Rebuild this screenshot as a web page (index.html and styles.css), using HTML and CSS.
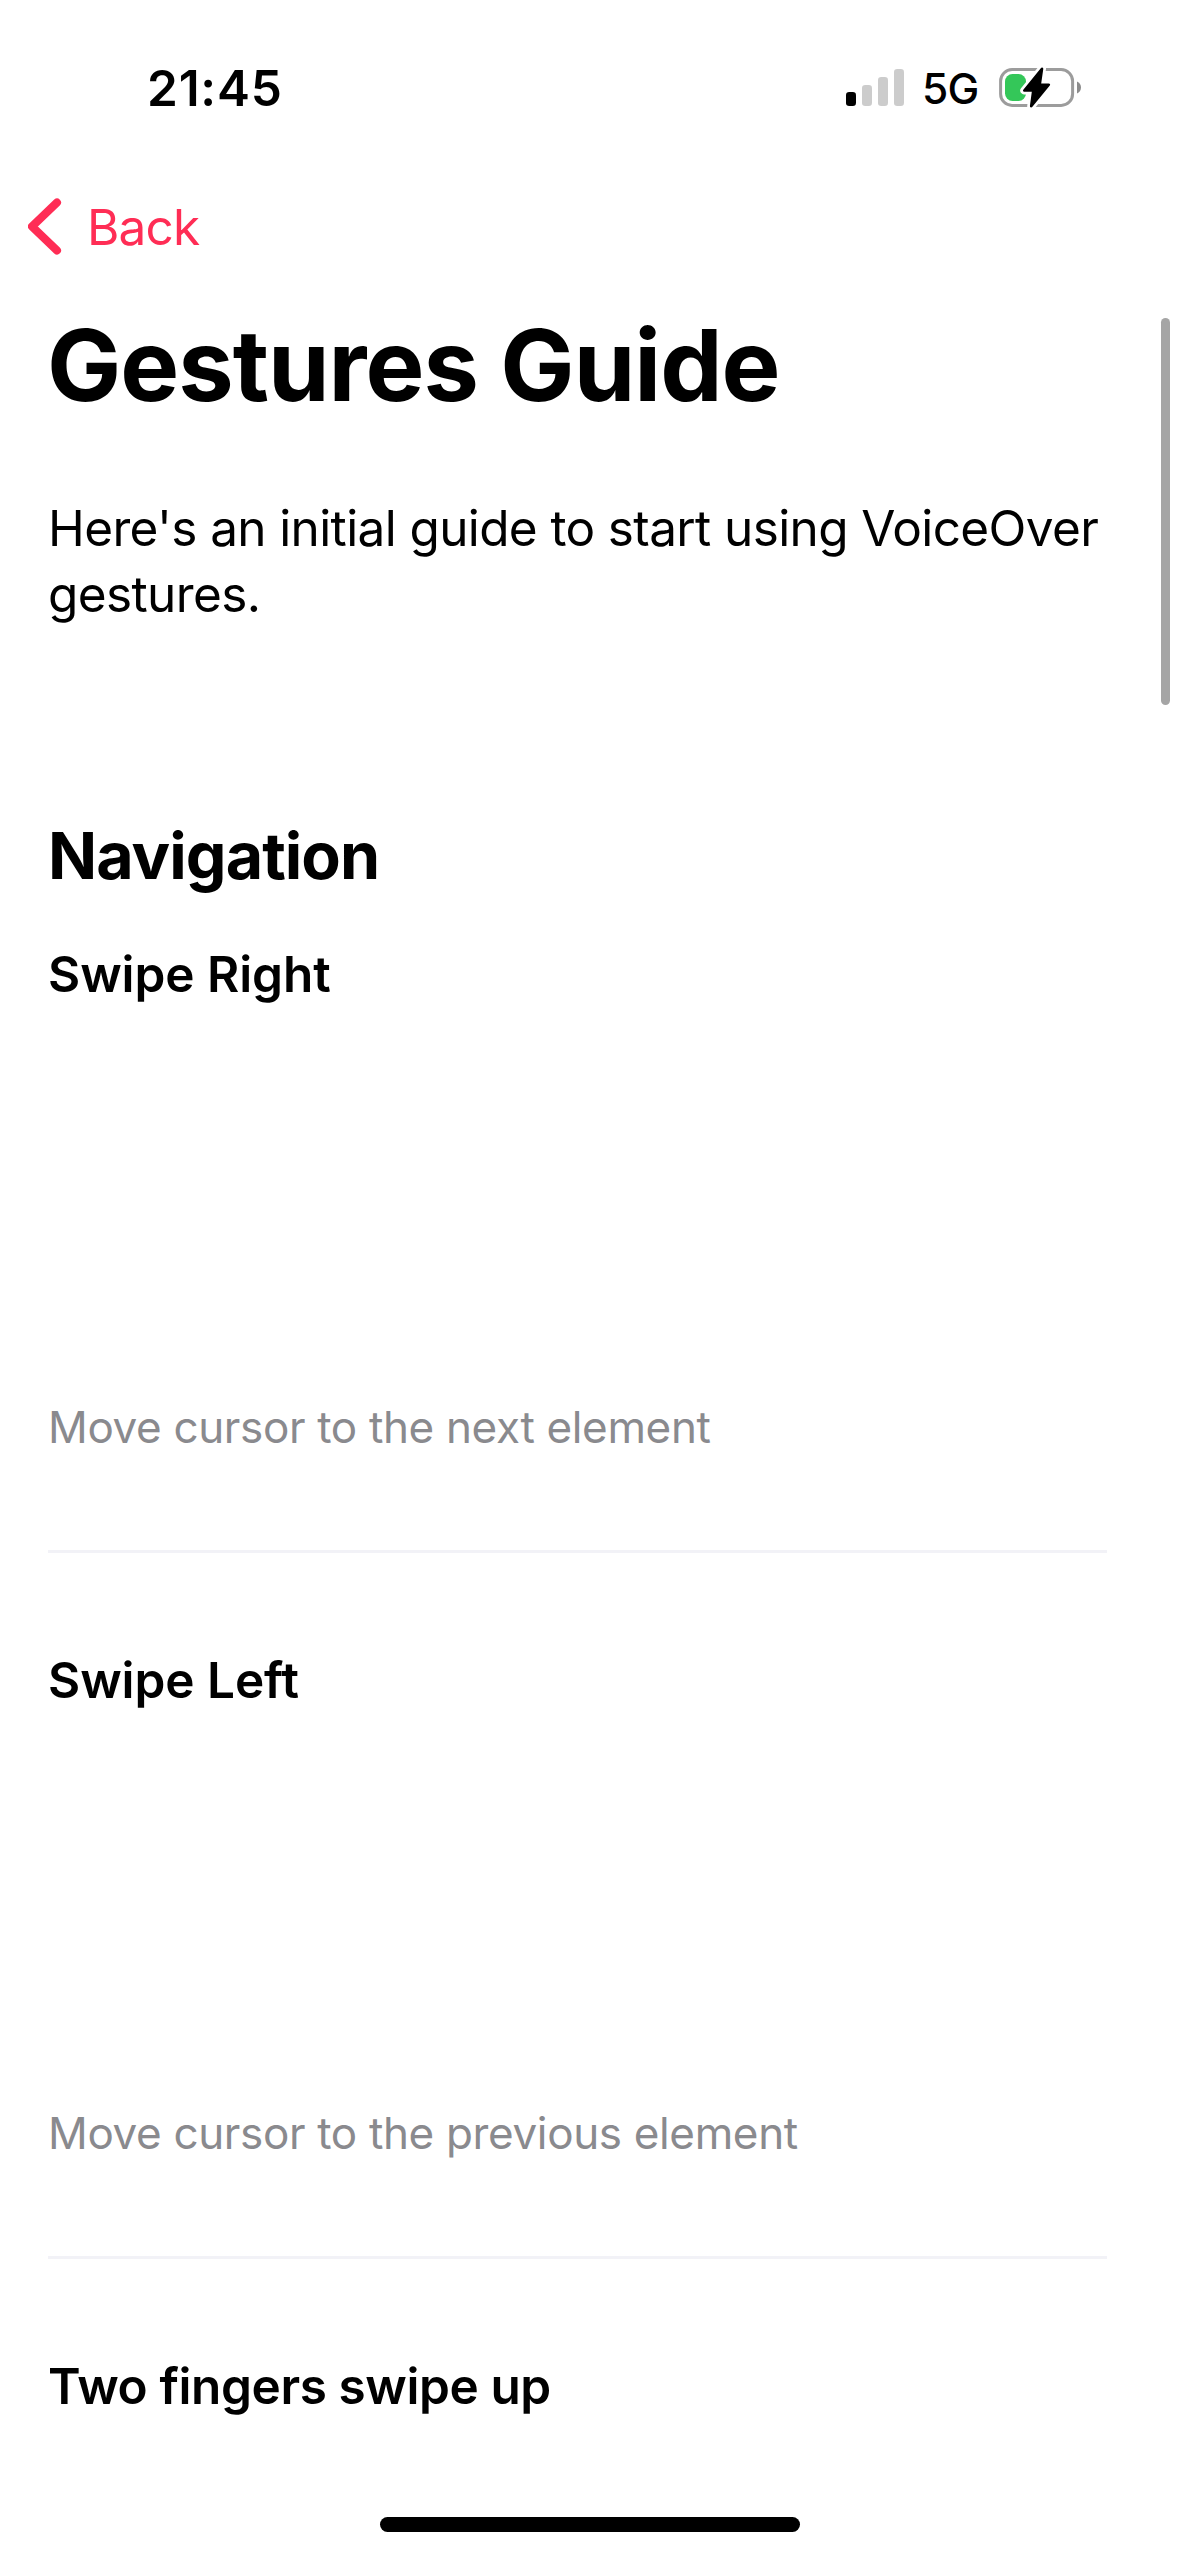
FILE: index.html
```html
<!DOCTYPE html>
<html lang="en">
<head>
  <meta charset="utf-8">
  <title>Gestures Guide</title>
  <link rel="stylesheet" href="styles.css">
</head>
<body>
  <div class="screen">
    <header class="status-bar">
      <span class="time">21:45</span>
      <div class="indicators">
        <svg class="signal" width="58" height="37" viewBox="0 0 58 37">
          <rect x="0" y="23" width="10" height="14" rx="3.2" fill="#000"/>
          <rect x="16" y="16" width="10" height="21" rx="3.2" fill="#ccc"/>
          <rect x="32" y="8" width="10" height="29" rx="3.2" fill="#ccc"/>
          <rect x="48" y="0" width="10" height="37" rx="3.2" fill="#ccc"/>
        </svg>
        <span class="network">5G</span>
        <svg class="battery" width="82" height="43" viewBox="0 0 82 43">
          <rect x="1.6" y="3.6" width="72" height="35.8" rx="11.5" fill="none" stroke="#9c9c9c" stroke-width="3"/>
          <path d="M78 15.500C80.400 16.500 82 18.800 82 21.500S80.400 26.500 78 27.500Z" fill="#8c8c8c"/>
          <rect x="6" y="8" width="21" height="27" rx="7.500" fill="#34c759"/>
          <path class="bolt-halo" d="M43 2.800 25.300 24.500H34.300L32.200 40.200 49.800 18.700H40.700Z"/>
          <path class="bolt" d="M43 2.800 25.300 24.500H34.300L32.200 40.200 49.800 18.700H40.700Z"/>
        </svg>
      </div>
    </header>

    <nav class="nav-bar">
      <a class="back">
        <svg width="34" height="58" viewBox="0 0 34 58">
          <path d="M29 4.500 4 28.500 29 52.500" fill="none" stroke="currentColor" stroke-width="8" stroke-linecap="round" stroke-linejoin="round"/>
        </svg>
        <span>Back</span>
      </a>
    </nav>

    <main class="content">
      <h1>Gestures Guide</h1>
      <p class="intro">Here's an initial guide to start using VoiceOver gestures.</p>
      <h2>Navigation</h2>
      <section class="gesture">
        <h3>Swipe Right</h3>
        <div class="animation"></div>
        <p>Move cursor to the next element</p>
      </section>
      <section class="gesture">
        <h3>Swipe Left</h3>
        <div class="animation"></div>
        <p>Move cursor to the previous element</p>
      </section>
      <section class="gesture">
        <h3 class="long">Two fingers swipe up</h3>
      </section>
    </main>

    <div class="scroll-thumb"></div>
    <div class="home-indicator"></div>
  </div>
</body>
</html>
```

FILE: styles.css
```css
* {
  box-sizing: border-box;
  margin: 0;
  padding: 0;
}

body {
  background: #fff;
  color: #000;
  font-family: "Inter", "Liberation Sans", sans-serif;
}

.screen {
  position: relative;
  width: 1179px;
  height: 2556px;
  overflow: hidden;
}

.status-bar {
  display: flex;
  align-items: center;
  justify-content: space-between;
  height: 176px;
  padding: 0 98px 0 147px;
}

.time {
  font-size: 49.5px;
  font-weight: 600;
  line-height: 60px;
  letter-spacing: 0.8px;
}

.indicators {
  display: flex;
  align-items: center;
}

.signal,
.battery {
  display: block;
  margin-bottom: 1px;
}

.network {
  width: 77px;
  margin-left: 18px;
  padding-top: 1px;
  font-size: 42.5px;
  font-weight: 500;
  line-height: 50px;
  letter-spacing: -0.8px;
}

.bolt-halo {
  fill: #fff;
  stroke: #fff;
  stroke-width: 8;
  stroke-linejoin: round;
}

.bolt {
  fill: #000;
  stroke: #000;
  stroke-width: 2.6;
  stroke-linejoin: round;
}

.nav-bar {
  display: flex;
  align-items: center;
  height: 102px;
  padding-left: 28px;
}

.back {
  display: flex;
  align-items: center;
  gap: 25px;
  color: #ff2d55;
  font-size: 49.5px;
  line-height: 60px;
  letter-spacing: -0.8px;
}

.content {
  padding: 27px 72px 0 48px;
}

h1 {
  margin-left: -1px;
  font-size: 99px;
  font-weight: 700;
  line-height: 120px;
  letter-spacing: -1px;
}

.intro {
  margin-top: 70px;
  font-size: 49.5px;
  line-height: 66px;
  letter-spacing: -0.62px;
}

h2 {
  margin-top: 189px;
  margin-bottom: 48px;
  font-size: 64.5px;
  font-weight: 700;
  line-height: 80px;
  letter-spacing: -0.95px;
}

h3 {
  font-size: 49.5px;
  font-weight: 600;
  line-height: 60px;
  letter-spacing: -0.06px;
}

h3.long {
  letter-spacing: -0.4px;
}

.animation {
  height: 396px;
}

.gesture p {
  color: #8a8a8e;
  font-size: 44px;
  line-height: 54px;
  letter-spacing: -0.35px;
}

.gesture + .gesture {
  margin-top: 96px;
  padding-top: 97px;
  border-top: 3px solid #f2f2f7;
}

.scroll-thumb {
  position: absolute;
  top: 318px;
  right: 9px;
  width: 9px;
  height: 387px;
  border-radius: 4.5px;
  background: #a5a5a5;
}

.home-indicator {
  position: absolute;
  bottom: 24px;
  left: 380px;
  width: 420px;
  height: 15px;
  border-radius: 7.5px;
  background: #000;
}
```
